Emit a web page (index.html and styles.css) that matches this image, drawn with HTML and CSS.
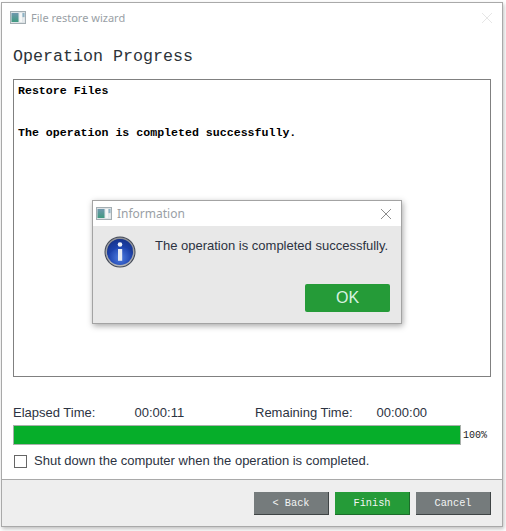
FILE: index.html
```html
<!DOCTYPE html>
<html lang="en">
<head>
<meta charset="utf-8">
<title>File restore wizard</title>
<link rel="stylesheet" href="styles.css">
</head>
<body>
<svg class="defs" width="0" height="0" aria-hidden="true">
  <defs>
    <linearGradient id="appg" x1="0" y1="0" x2="0" y2="1">
      <stop offset="0" stop-color="#6f97ad"/>
      <stop offset="1" stop-color="#3f9a80"/>
    </linearGradient>
    <symbol id="app" viewBox="0 0 16 13">
      <rect x="0.5" y="0.5" width="15" height="12" fill="#dde3e6" stroke="#a3adb2"/>
      <rect x="1.5" y="2" width="7" height="9" fill="url(#appg)"/>
      <rect x="9.5" y="2" width="2.5" height="9" fill="#f5f7f7"/>
      <rect x="12.5" y="2" width="2" height="4" fill="#8fb4c6"/>
      <rect x="12.5" y="7" width="2" height="4" fill="#e8ecee"/>
    </symbol>
  </defs>
</svg>
<main class="window">
  <header class="titlebar">
    <svg class="app-icon"><use href="#app"/></svg>
    <span class="title">File restore wizard</span>
    <svg class="close faint" viewBox="0 0 12 12"><path d="M1 1 11 11M11 1 1 11"/></svg>
  </header>
  <section class="content">
    <h1 class="heading">Operation Progress</h1>
    <div class="log">
      <p class="log-line">Restore Files</p>
      <p class="log-line log-gap">The operation is completed successfully.</p>
    </div>
    <div class="times">
      <span class="t-label">Elapsed Time:</span>
      <span class="t-value">00:00:11</span>
      <span class="t-label">Remaining Time:</span>
      <span class="t-value">00:00:00</span>
    </div>
    <div class="progress-row">
      <div class="progress"><div class="progress-fill"></div></div>
      <span class="percent">100%</span>
    </div>
    <label class="shutdown"><span class="checkbox"></span>Shut down the computer when the operation is completed.</label>
  </section>
  <footer class="footer">
    <button class="btn btn-gray">&lt; Back</button>
    <button class="btn btn-green">Finish</button>
    <button class="btn btn-gray">Cancel</button>
  </footer>
</main>
<div class="dialog">
  <div class="dialog-bar">
    <svg class="app-icon"><use href="#app"/></svg>
    <span class="dialog-title">Information</span>
    <svg class="close" viewBox="0 0 12 12"><path d="M1 1 11 11M11 1 1 11"/></svg>
  </div>
  <div class="dialog-body">
    <div class="dialog-msg">
      <svg class="info" viewBox="0 0 32 32">
        <defs>
          <radialGradient id="ig" cx="0.5" cy="0.72" r="0.7">
            <stop offset="0" stop-color="#4f7de0"/>
            <stop offset="0.6" stop-color="#1f45b0"/>
            <stop offset="1" stop-color="#12266e"/>
          </radialGradient>
          <linearGradient id="ring" x1="0" y1="0" x2="0" y2="1">
            <stop offset="0" stop-color="#8d9096"/>
            <stop offset="1" stop-color="#b4b6ba"/>
          </linearGradient>
        </defs>
        <circle cx="16" cy="16" r="15.5" fill="#444a58"/>
        <circle cx="16" cy="16" r="14.5" fill="url(#ring)"/>
        <circle cx="16" cy="16" r="13" fill="url(#ig)"/>
        <path d="M3.5 19 15 10 29 13C28 7 22 3 16 3 8 3 3 10 3.500 19Z" fill="#1c3fa8" opacity=".55"/>
        <circle cx="16" cy="8.500" r="2.300" fill="#f4f6fb"/>
        <path d="M14 13h4.200v11.800h-4.200z" fill="#e8ebf3"/>
      </svg>
      <p class="dialog-text">The operation is completed successfully.</p>
    </div>
    <div class="dialog-actions"><button class="ok">OK</button></div>
  </div>
</div>
</body>
</html>
```
FILE: styles.css
```css
* { box-sizing: border-box; }
html, body { margin: 0; height: 100%; background: #fff; overflow: hidden; }
body { padding: 2px 3px 4px 1px; font-family: "Liberation Sans", Arial, sans-serif; position: relative; }
.defs { position: absolute; }
p, h1 { margin: 0; }

.window {
  height: 525px;
  border: 1px solid #a9a9a9;
  background: #fff;
  display: flex;
  flex-direction: column;
  box-shadow: 1px 2px 4px rgba(0,0,0,.25);
}
.titlebar { height: 29px; display: flex; align-items: center; padding: 0 9px 0 8px; flex: none; }
.app-icon { width: 16px; height: 13px; flex: none; }
.title { margin-left: 5px; font: 11px "Noto Sans", sans-serif; color: #9a9fa6; flex: 1; }
.close { width: 12px; height: 12px; flex: none; }
.close path { stroke: #8c8c8c; stroke-width: 1; fill: none; }
.close.faint path { stroke: #e6e6e6; }

.content { flex: 1; padding: 0 11px 0 11px; display: flex; flex-direction: column; }
.heading { font: 400 16.67px/20px "Liberation Mono", monospace; color: #2c3338; margin-top: 15px; }
.log { margin-top: 12px; height: 298px; border: 1px solid #808080; padding: 4px 4px; }
.log-line { font: 700 11.6px/14px "Liberation Mono", monospace; color: #000; }
.log-gap { margin-top: 28px; }

.times { display: flex; margin-top: 28px; font-size: 13px; line-height: 16px; color: #2c3342; }
.t-label { flex: none; width: 121.500px; }
.t-value { flex: none; width: 120.500px; }

.progress-row { display: flex; align-items: center; margin-top: 4px; height: 20px; }
.progress { width: 448px; height: 20px; border: 1px solid #a8b0aa; background: #06ae2a; }
.progress-fill { width: 100%; height: 100%; background: #06ae2a; }
.percent { margin-left: 2px; font: 10px "Liberation Mono", monospace; color: #222; }

.shutdown { display: flex; align-items: center; margin-top: 8px; font-size: 13px; line-height: 16px; color: #2c3342; padding-left: 1px; }
.checkbox { width: 13px; height: 13px; border: 1px solid #666; margin-right: 7px; flex: none; background: #fff; }

.footer {
  height: 47px;
  flex: none;
  background: #eeeeee;
  border-top: 1px solid #a9a9a9;
  display: flex;
  justify-content: flex-end;
  align-items: flex-start;
  gap: 6px;
  padding: 12px 11px 0 0;
}
.btn {
  width: 75px;
  height: 23px;
  border: 0;
  border-right: 1px solid #3f4445;
  border-bottom: 1px solid #3f4445;
  padding: 0;
  font: 10.300px "Liberation Mono", monospace;
  color: #f2f4f4;
}
.btn-gray { background: #757b7c; }
.btn-green { background: #259b38; border-color: #1c6b2a; }

.dialog {
  position: absolute;
  left: 92px;
  top: 200px;
  width: 310px;
  height: 124px;
  border: 1px solid #a3a3a3;
  box-shadow: 1px 2px 6px rgba(0,0,0,.35);
  display: flex;
  flex-direction: column;
  background: #e8e8e8;
}
.dialog-bar { height: 25px; background: #fff; display: flex; align-items: center; padding: 0 9px 0 3px; flex: none; }
.dialog-title { margin-left: 5px; font: 12px "Noto Sans", sans-serif; color: #9a9fa6; flex: 1; }
.dialog-body { flex: 1; display: flex; flex-direction: column; justify-content: space-between; padding: 10px 11px 11px 11px; }
.dialog-msg { display: flex; align-items: flex-start; }
.info { width: 32px; height: 32px; flex: none; margin-right: 19px; }
.dialog-text { font-size: 13px; line-height: 16px; margin-top: 2px; color: #2c3342; white-space: nowrap; }
.dialog-actions { display: flex; justify-content: flex-end; }
.ok {
  width: 85px;
  height: 28px;
  border: 0;
  border-radius: 2px;
  background: #259b38;
  color: #d8f2e0;
  font: 16px "Liberation Sans", sans-serif;
  padding: 0;
}
```
